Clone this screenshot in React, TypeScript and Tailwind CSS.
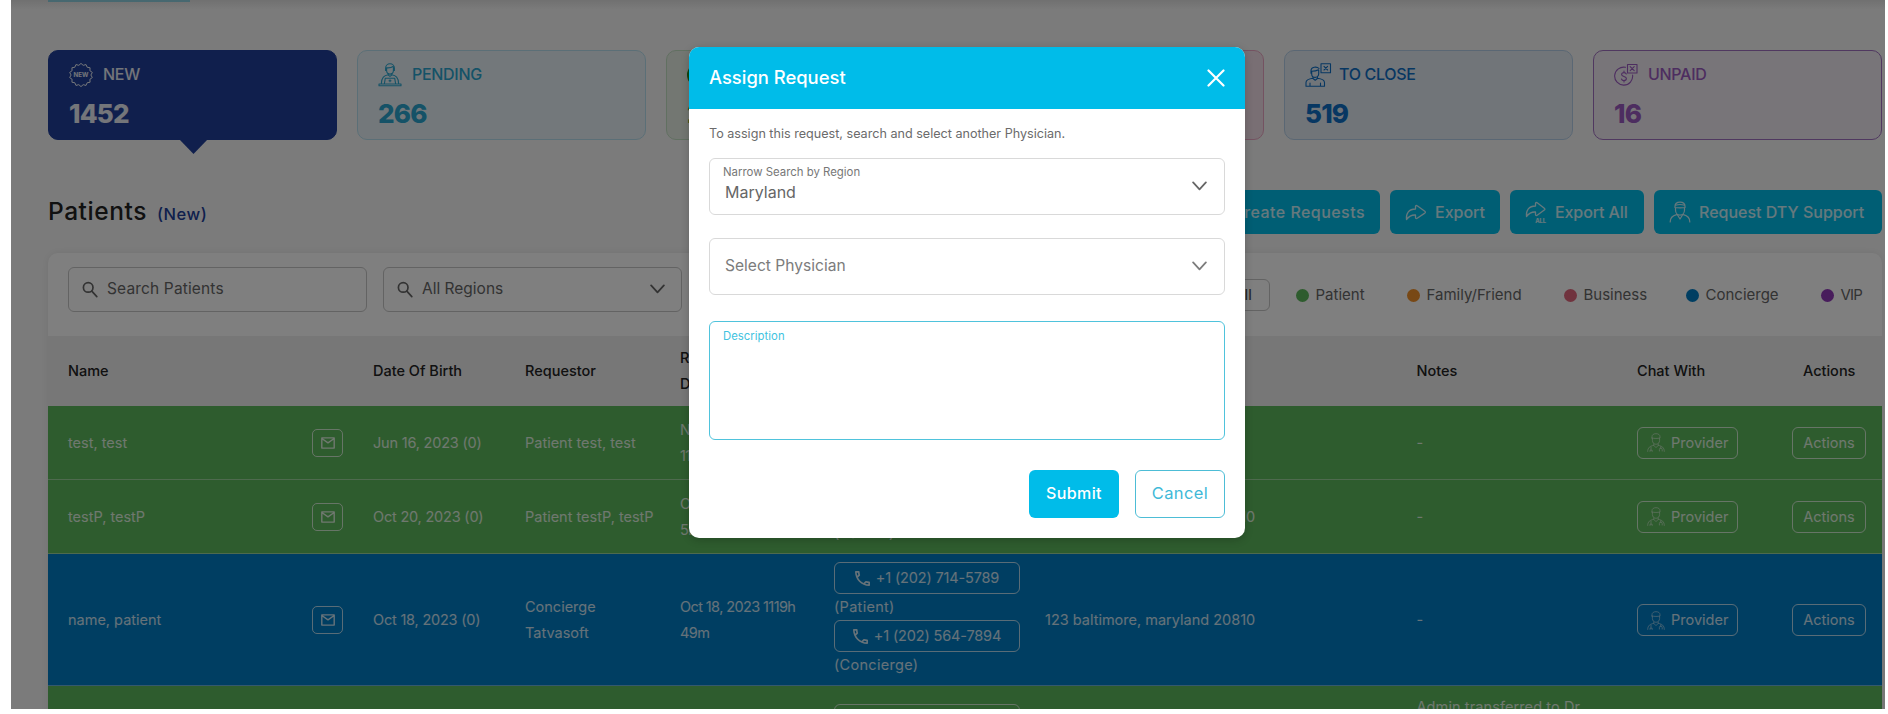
import type { ReactNode } from "react";

type Tone = "patient" | "concierge";

interface Phone {
  number: string;
  owner: string;
}

interface Row {
  name: string;
  dob: string;
  requestor: string[];
  requested: string[];
  phones: Phone[];
  address: string;
  notes: string[];
  tone: Tone;
}

const rows: Row[] = [
  {
    name: "test, test",
    dob: "Jun 16, 2023 (0)",
    requestor: ["Patient test, test"],
    requested: ["Nov 2, 2023", "11h 20m"],
    phones: [{ number: "+1 (202) 714-5789", owner: "(Patient)" }],
    address: "",
    notes: ["-"],
    tone: "patient",
  },
  {
    name: "testP, testP",
    dob: "Oct 20, 2023 (0)",
    requestor: ["Patient testP, testP"],
    requested: ["Oct 20, 2023", "5h 12m"],
    phones: [{ number: "+1 (202) 714-5789", owner: "(Patient)" }],
    address: "123 baltimore, maryland 20810",
    notes: ["-"],
    tone: "patient",
  },
  {
    name: "name, patient",
    dob: "Oct 18, 2023 (0)",
    requestor: ["Concierge", "Tatvasoft"],
    requested: ["Oct 18, 2023 1119h", "49m"],
    phones: [
      { number: "+1 (202) 714-5789", owner: "(Patient)" },
      { number: "+1 (202) 564-7894", owner: "(Concierge)" },
    ],
    address: "123 baltimore, maryland 20810",
    notes: ["-"],
    tone: "concierge",
  },
];

const columns =
  "grid grid-cols-[244px_61px_152px_155px_154px_211px_371.5px_220.5px_155px_74px] items-center pl-5";

function Chevron({ className }: { className: string }) {
  return (
    <svg className={className} viewBox="0 0 16 10" fill="none" stroke="currentColor" strokeWidth="1.9" strokeLinecap="round" strokeLinejoin="round">
      <path d="M1.2 1.2 8 8.6 14.8 1.2" />
    </svg>
  );
}

function SearchIcon() {
  return (
    <svg className="h-[17px] w-4 shrink-0" viewBox="0 0 16 17" fill="none" stroke="currentColor" strokeWidth="1.7" strokeLinecap="round">
      <circle cx="6.2" cy="6.4" r="4.8" />
      <path d="m9.8 10.2 5 5.4" />
    </svg>
  );
}

function NewBadgeIcon() {
  const teeth = 14;
  const points = Array.from({ length: teeth * 2 }, (_, i) => {
    const a = (i * Math.PI) / teeth;
    const r = i % 2 ? 9.9 : 11.6;
    return `${12 + r * Math.sin(a)},${12 - r * Math.cos(a)}`;
  }).join(" ");
  return (
    <svg className="h-6 w-6" viewBox="0 0 24 24" fill="none" stroke="currentColor" strokeWidth="1">
      <polygon points={points} strokeLinejoin="round" />
      <text x="12" y="14.4" textAnchor="middle" fontSize="6.2" fontWeight="700" fill="currentColor" stroke="none" textLength="15">
        NEW
      </text>
    </svg>
  );
}

function PendingIcon() {
  return (
    <svg className="h-6 w-6" viewBox="0 0 24 24" fill="none" stroke="currentColor" strokeWidth="1.1" strokeLinejoin="round" strokeLinecap="round">
      <path d="M7.6 7.5V5.2a4.4 4.4 0 0 1 8.8 0v2.3M8.6 4.8c3 .2 5.2-.3 6.4-1.3M8.6 5v2.5a3.4 3.6 0 0 0 6.8 0V4.5" />
      <path d="M10.3 10.5v1.6l1.7 1.3 1.7-1.3v-1.6M10.3 11.8c-4.3.7-6.6 2.3-6.9 8.7M13.7 11.8c4.3.7 6.6 2.3 6.9 8.7" />
      <path d="M6.4 20.7 7.3 15.2h9.4l.9 5.5M1 21h22v1.8H1zM12 16.8v2M11 17.8h2" />
    </svg>
  );
}

function CloseRequestIcon() {
  return (
    <svg className="h-6 w-7" viewBox="0 0 28 24" fill="none" stroke="currentColor" strokeWidth="1.1" strokeLinejoin="round" strokeLinecap="round">
      <path d="M16 .7h9.5v9H16zM19 3.4l3.6 3.6M22.600 3.400l-3.600 3.600" />
      <path d="M14 5.500C12 3.300 6 3.500 6 7.800v2.400M6.700 8.300c3 0 5-.4 6.800-1.500M6.700 8.500V11a3.500 3.400 0 0 0 7 0V7" />
      <path d="M8 14.2v1.300l2.200 1.800 2.200-1.800v-1.300M8 15.3c-4.500.6-7 1.600-7 4.200v3.800h18.500v-3.800c0-2.600-2.500-3.600-7-4.200M5 20v3.300M15.500 20v3.300" />
    </svg>
  );
}

function UnpaidIcon() {
  return (
    <svg className="h-6 w-6" viewBox="0 0 24 24" fill="none" stroke="currentColor" strokeWidth="1.1" strokeLinejoin="round" strokeLinecap="round">
      <path d="M13.5 1.5H23V10h-9.500zM16.200 3.700l4 4M20.200 3.700l-4 4" />
      <path d="M11.5 4.3A9 9 0 1 0 18.6 12" />
      <path d="M12.3 11c-.4-1-1.2-1.4-2.3-1.4-1.5 0-2.4.8-2.4 1.9 0 2.6 4.8 1.4 4.8 4.1 0 1.2-1 2-2.4 2-1.3 0-2.2-.6-2.5-1.6M10 8v1.6M10 17.6V19" />
    </svg>
  );
}

function ShareIcon({ all = false }: { all?: boolean }) {
  return (
    <svg className="h-[22px] w-[22px] shrink-0" viewBox="0 0 22 22" fill="none" stroke="currentColor" strokeWidth="1.3" strokeLinejoin="round" strokeLinecap="round">
      <path
        d={
          all
            ? "M1.5 15.5C.8 9 4 5 10.5 5V2.600c0-1 .9-1.400 1.700-.8L19.300 7.200c.8.6.8 1.300 0 1.900l-7.100 5.200c-.8.6-1.700.2-1.700-.8v-2.500C7 10.800 4 12 1.500 15.500Z"
            : "M1.5 18.5C.8 12 4 8 10.5 8V5.600c0-1 .9-1.400 1.700-.8l7.600 5.400c.8.6.8 1.300 0 1.900l-7.600 5.200c-.8.6-1.700.2-1.700-.8V14C7 13.800 4 15 1.500 18.500Z"
        }
      />
      {all && (
        <text x="15.500" y="21.600" textAnchor="middle" fontSize="5.800" fontWeight="800" fill="currentColor" stroke="none">
          ALL
        </text>
      )}
    </svg>
  );
}

function SupportIcon() {
  return (
    <svg className="h-[22px] w-[22px] shrink-0" viewBox="0 0 22 22" fill="none" stroke="currentColor" strokeWidth="1.2" strokeLinejoin="round" strokeLinecap="round">
      <path d="M6 6.5V5.300C6 2.500 8 1.200 11 1.200s5 1.300 5 4.100v1.200M6 6.500c3 .5 7 .5 10 0M6.500 6.700V9c0 3 2 5.200 4.500 5.200S15.500 12 15.500 9V6.700M6.500 4.200c2.500-.8 6.500-.8 9 0" />
      <path d="M7.500 13.700c-4 1-6.300 3-6.300 7.300M14.500 13.700c4 1 6.300 3 6.300 7.300M8.500 14 11 18l2.500-4" />
    </svg>
  );
}

function ProviderIcon() {
  return (
    <svg className="h-[19px] w-[18px] shrink-0 opacity-60" viewBox="0 0 18 19" fill="none" stroke="currentColor" strokeWidth="1" strokeLinejoin="round" strokeLinecap="round">
      <path d="M5 5V3.700C5 1.700 6.700.700 9 .700s4 1 4 3V5c-2.500.600-5.500.600-8 0ZM5.400 5.300v2.200c0 2 1.600 3.800 3.600 3.800s3.600-1.800 3.600-3.800V5.300" />
      <path d="M6.800 10.800v1.600L9 14.600l2.200-2.200v-1.600M6.800 12.300C3 13 .7 14.500.7 18.400M11.200 12.300c3.800.7 6.100 2.200 6.100 6.100M4 14v3M3 18.400v-1.200h2.200v1.200M13.800 13.600v2M12.400 18v-1.500a1.400 1.400 0 0 1 2.800 0V18" />
    </svg>
  );
}

function MailIcon() {
  return (
    <svg className="h-3 w-3.5" viewBox="0 0 14 12" fill="none" stroke="currentColor" strokeWidth="1.4" strokeLinejoin="round">
      <path d="M.8.9h12.4v10.2H.8zM.8 1.5 7 5.8l6.2-4.3" />
    </svg>
  );
}

function PhoneIcon() {
  return (
    <svg className="h-[15px] w-[15px] shrink-0" viewBox="3 3 18 18" fill="currentColor">
      <path d="M6.54 5c.06.89.21 1.76.45 2.59l-1.2 1.2c-.41-1.2-.67-2.47-.76-3.79h1.51m9.86 12.02c.85.24 1.72.39 2.6.45v1.49c-1.32-.09-2.59-.35-3.8-.75l1.2-1.19M7.5 3H4c-.55 0-1 .45-1 1 0 9.39 7.61 17 17 17 .55 0 1-.45 1-1v-3.49c0-.55-.45-1-1-1-1.24 0-2.45-.2-3.57-.57-.1-.04-.21-.05-.31-.05-.26 0-.51.1-.71.29l-2.2 2.2c-2.83-1.45-5.15-3.76-6.59-6.59l2.2-2.2c.28-.28.36-.67.25-1.02C8.7 6.45 8.5 5.25 8.5 4c0-.55-.45-1-1-1z" />
    </svg>
  );
}

interface StatusCardProps {
  className: string;
  icon: ReactNode;
  label: string;
  count: string;
  active?: boolean;
}

function StatusCard({ className, icon, label, count, active = false }: StatusCardProps) {
  return (
    <div className={`relative h-[90px] rounded-[10px] border pl-5 pt-[11.5px] ${className}`}>
      <div className="flex h-6 items-center gap-[10px]">
        {icon}
        <span className="-mt-[2px] text-[16px] font-medium leading-[22px] tracking-[-0.3px]">{label}</span>
      </div>
      <div className="mt-[9px] text-[26px] font-extrabold leading-[36px] tracking-[-0.8px]">{count}</div>
      {active && (
        <svg className="absolute left-[130px] top-[88px] h-[15px] w-[29px]" viewBox="0 0 29 15" fill="#203f9a">
          <path d="M0 0h29L14.5 15Z" />
        </svg>
      )}
    </div>
  );
}

function LegendItem({ dot, label, className }: { dot: string; label: string; className: string }) {
  return (
    <div className={`flex shrink-0 items-center gap-[7px] ${className}`}>
      <span className={`h-[13px] w-[13px] rounded-full ${dot}`} />
      {label}
    </div>
  );
}

function PhoneEntry({ phone }: { phone: Phone }) {
  return (
    <div>
      <div className="flex h-8 w-[186px] items-center justify-center gap-[6px] rounded-[6px] border border-white/70">
        <PhoneIcon />
        <span className="tracking-[-0.15px]">{phone.number}</span>
      </div>
      <div className="h-[26px] leading-[26px] tracking-[0.3px]">{phone.owner}</div>
    </div>
  );
}

function TableRow({ row }: { row: Row }) {
  return (
    <div
      className={`${columns} border-b border-white/40 pb-[7.25px] pt-[8px] text-[14.5px] leading-[26px] text-white/80 ${
        row.tone === "patient" ? "bg-[#5cb85c]" : "bg-[#007dc5]"
      }`}
    >
      <div>{row.name}</div>
      <div className="flex h-7 w-[31px] items-center justify-center rounded-[5px] border border-white/70">
        <MailIcon />
      </div>
      <div className="tracking-[-0.2px]">{row.dob}</div>
      <div>{row.requestor.map((line) => <div key={line} className="whitespace-nowrap">{line}</div>)}</div>
      <div className="tracking-[-0.6px]">{row.requested.map((line) => <div key={line} className="whitespace-nowrap">{line}</div>)}</div>
      <div>{row.phones.map((phone) => <PhoneEntry key={phone.number} phone={phone} />)}</div>
      <div>{row.address}</div>
      <div>{row.notes.map((line) => <div key={line}>{line}</div>)}</div>
      <div className="flex h-8 w-[101px] items-center gap-[6px] rounded-[6px] border border-white/70 pl-[9px]">
        <ProviderIcon />
        <span>Provider</span>
      </div>
      <div className="flex h-8 w-[74px] items-center justify-center rounded-[6px] border border-white/70">Actions</div>
    </div>
  );
}

function AssignDialog() {
  return (
    <div className="absolute left-[678px] top-[47px] flex h-[491px] w-[556px] flex-col overflow-hidden rounded-[10px] bg-white shadow-[0_2px_8px_rgba(0,0,0,0.2)]">
      <div className="flex h-[61.5px] shrink-0 items-center justify-between bg-[#00bce9] pl-5 pr-5 text-white">
        <h2 className="text-[18.4px] font-medium">Assign Request</h2>
        <svg className="h-[18px] w-[18px]" viewBox="0 0 18 18" fill="none" stroke="currentColor" strokeWidth="2.2" strokeLinecap="round">
          <path d="m1.5 1.5 15 15M16.5 1.5l-15 15" />
        </svg>
      </div>
      <div className="flex flex-col px-5 pt-4">
        <p className="text-[12.6px] leading-[18px] text-[#6b6b6b]">To assign this request, search and select another Physician.</p>
        <div className="mt-[15px] flex h-[57px] items-center justify-between rounded-[6px] border border-[#d9d9d9] pl-[13px] pr-[17px] text-[#666]">
          <div className="-mt-[5px]">
            <div className="text-[11.4px] leading-[16px] text-[#777]">Narrow Search by Region</div>
            <div className="pl-[2px] text-[16px] leading-[24px]">Maryland</div>
          </div>
          <Chevron className="h-[10px] w-[15px]" />
        </div>
        <div className="mt-[23px] flex h-[57px] items-center justify-between rounded-[6px] border border-[#d9d9d9] pl-[15px] pr-[17px] text-[#7c7c7c]">
          <span className="-mt-px text-[15.6px]">Select Physician</span>
          <Chevron className="h-[10px] w-[15px]" />
        </div>
        <div className="mt-[26px] h-[119.5px] rounded-[6px] border border-[#4fc3dc] pl-[13px] pt-[5px] text-[11.3px] leading-[18px] tracking-[0.05px] text-[#3fc3e0]">Description</div>
        <div className="mt-[29.5px] flex justify-end gap-4">
          <button className="h-12 w-[90px] rounded-[6px] bg-[#00bce9] pb-px text-[16px] font-medium tracking-[0.4px] text-white">Submit</button>
          <button className="h-12 w-[90px] rounded-[6px] border border-[#4dbdd6] pb-px text-[16.5px] tracking-[0.4px] text-[#3fb9d8]">Cancel</button>
        </div>
      </div>
    </div>
  );
}

export default function App() {
  const action = "flex h-11 items-center rounded-[6px] bg-[#00bce9] text-[16px] font-medium text-white/80";
  return (
    <div className="h-[714px] w-[1888px] overflow-hidden bg-white pl-[11px] font-[Inter,sans-serif] text-[#222]">
      <div className="relative h-[709px] w-[1874px] overflow-hidden bg-[#f7f7f7]">
        <div className="h-[10px] bg-linear-to-b from-[#e2e2e2] to-[#f7f7f7] pl-[37px]">
          <div className="h-[2px] w-[142px] bg-[#8fd0e0]" />
        </div>
        <div className="ml-[37px] mt-10 grid w-[1834px] grid-cols-6 gap-5">
          <StatusCard active className="border-[#203f9a] bg-[#203f9a] text-white/90" icon={<NewBadgeIcon />} label="NEW" count="1452" />
          <StatusCard className="border-[#b7dfee] bg-[#e6f1f6] text-[#2aa5cf]" icon={<PendingIcon />} label="PENDING" count="266" />
          <StatusCard className="border-[#c3e0c3] bg-[#e6efe4] text-[#228c20]" icon={<span className="h-6 w-6 rounded-full border-2" />} label="ACTIVE" count="24" />
          <StatusCard className="border-[#e9a5c2] bg-[#f3dfe8] text-[#da0f82]" icon={<span className="h-6 w-6 rounded-full border-2" />} label="CONCLUDE" count="41" />
          <StatusCard className="border-[#b5cfe8] bg-[#e3ebf3] text-[#0f6fc5]" icon={<span className="-mr-1"><CloseRequestIcon /></span>} label="TO CLOSE" count="519" />
          <StatusCard className="border-[#a170c0] bg-[#f0eaf3] text-[#9b5ac0]" icon={<UnpaidIcon />} label="UNPAID" count="16" />
        </div>

        <div className="ml-[37px] mt-[49.5px] flex h-11 w-[1834px] items-center justify-between">
          <h1 className="flex items-baseline gap-[10px] text-[24.5px] font-medium tracking-[0.55px]">
            Patients <span className="text-[16.5px] tracking-[0.5px] text-[#203f9a]">(New)</span>
          </h1>
          <div className="flex gap-[10px]">
            <div className={`${action} w-[190px] justify-end pr-[15px] tracking-[0.45px]`}>Create Requests</div>
            <div className={`${action} w-[110px] gap-2 pl-[15px]`}><ShareIcon />Export</div>
            <div className={`${action} w-[134px] gap-2 pl-[15px] tracking-[-0.1px]`}><ShareIcon all />Export All</div>
            <div className={`${action} w-[228px] gap-2 pl-[15px]`}><SupportIcon />Request DTY Support</div>
          </div>
        </div>

        <div className="ml-[37px] mt-[19.5px] w-[1834px] overflow-hidden rounded-t-[10px] bg-white shadow-[0_0_8px_rgba(0,0,0,0.08)]">
          <div className="flex h-[83px] pl-5 pt-[13.5px] text-[15.5px] text-[#666]">
            <div className="flex h-[45px] w-[299px] shrink-0 items-center gap-[9px] rounded-[6px] border border-[#c6c6c6] pl-[13px] tracking-[0.15px]">
              <SearchIcon />Search Patients
            </div>
            <div className="ml-4 flex h-[45px] w-[299px] shrink-0 items-center gap-[9px] rounded-[6px] border border-[#c6c6c6] pl-[13px] pr-4">
              <SearchIcon />All Regions
              <Chevron className="ml-auto h-[10px] w-[15px]" />
            </div>
            <div className="ml-auto flex h-[57px] items-center text-[15px]">
              <div className="flex h-8 w-[54px] items-center justify-center rounded-[6px] border border-[#c6c6c6] text-[#444]">All</div>
              <LegendItem className="ml-[25.5px] w-[111px]" dot="bg-[#5cb85c]" label="Patient" />
              <LegendItem className="w-[157px]" dot="bg-[#f0912b]" label="Family/Friend" />
              <LegendItem className="w-[122px]" dot="bg-[#e0677d]" label="Business" />
              <LegendItem className="w-[135px]" dot="bg-[#007dc5]" label="Concierge" />
              <LegendItem className="w-[61.5px] tracking-[-0.8px]" dot="bg-[#9038b8]" label="VIP" />
            </div>
          </div>
          <div className={`${columns} h-[69.5px] bg-[#eeeeee] text-[14.5px] font-medium leading-[26px]`}>
            <div className="col-span-2">Name</div>
            <div>Date Of Birth</div>
            <div>Requestor</div>
            <div>Requested<br />Date</div>
            <div>Phone</div>
            <div>Address</div>
            <div>Notes</div>
            <div>Chat With</div>
            <div className="pl-[11px]">Actions</div>
          </div>
          {rows.map((row) => <TableRow key={row.name} row={row} />)}
          <div className={`${columns} bg-[#5cb85c] py-2 text-[14.5px] leading-[26px] text-white/80`}>
            <div className="col-start-6"><PhoneEntry phone={{ number: "+1 (202) 714-5789", owner: "(Patient)" }} /></div>
            <div className="col-start-8 w-[180px] tracking-[0.1px]">Admin transferred to Dr. AGOLA on 02/11/2023 at 11:20 AM</div>
          </div>
        </div>

        <div className="absolute inset-0 bg-black/50" />
        <AssignDialog />
      </div>
    </div>
  );
}
